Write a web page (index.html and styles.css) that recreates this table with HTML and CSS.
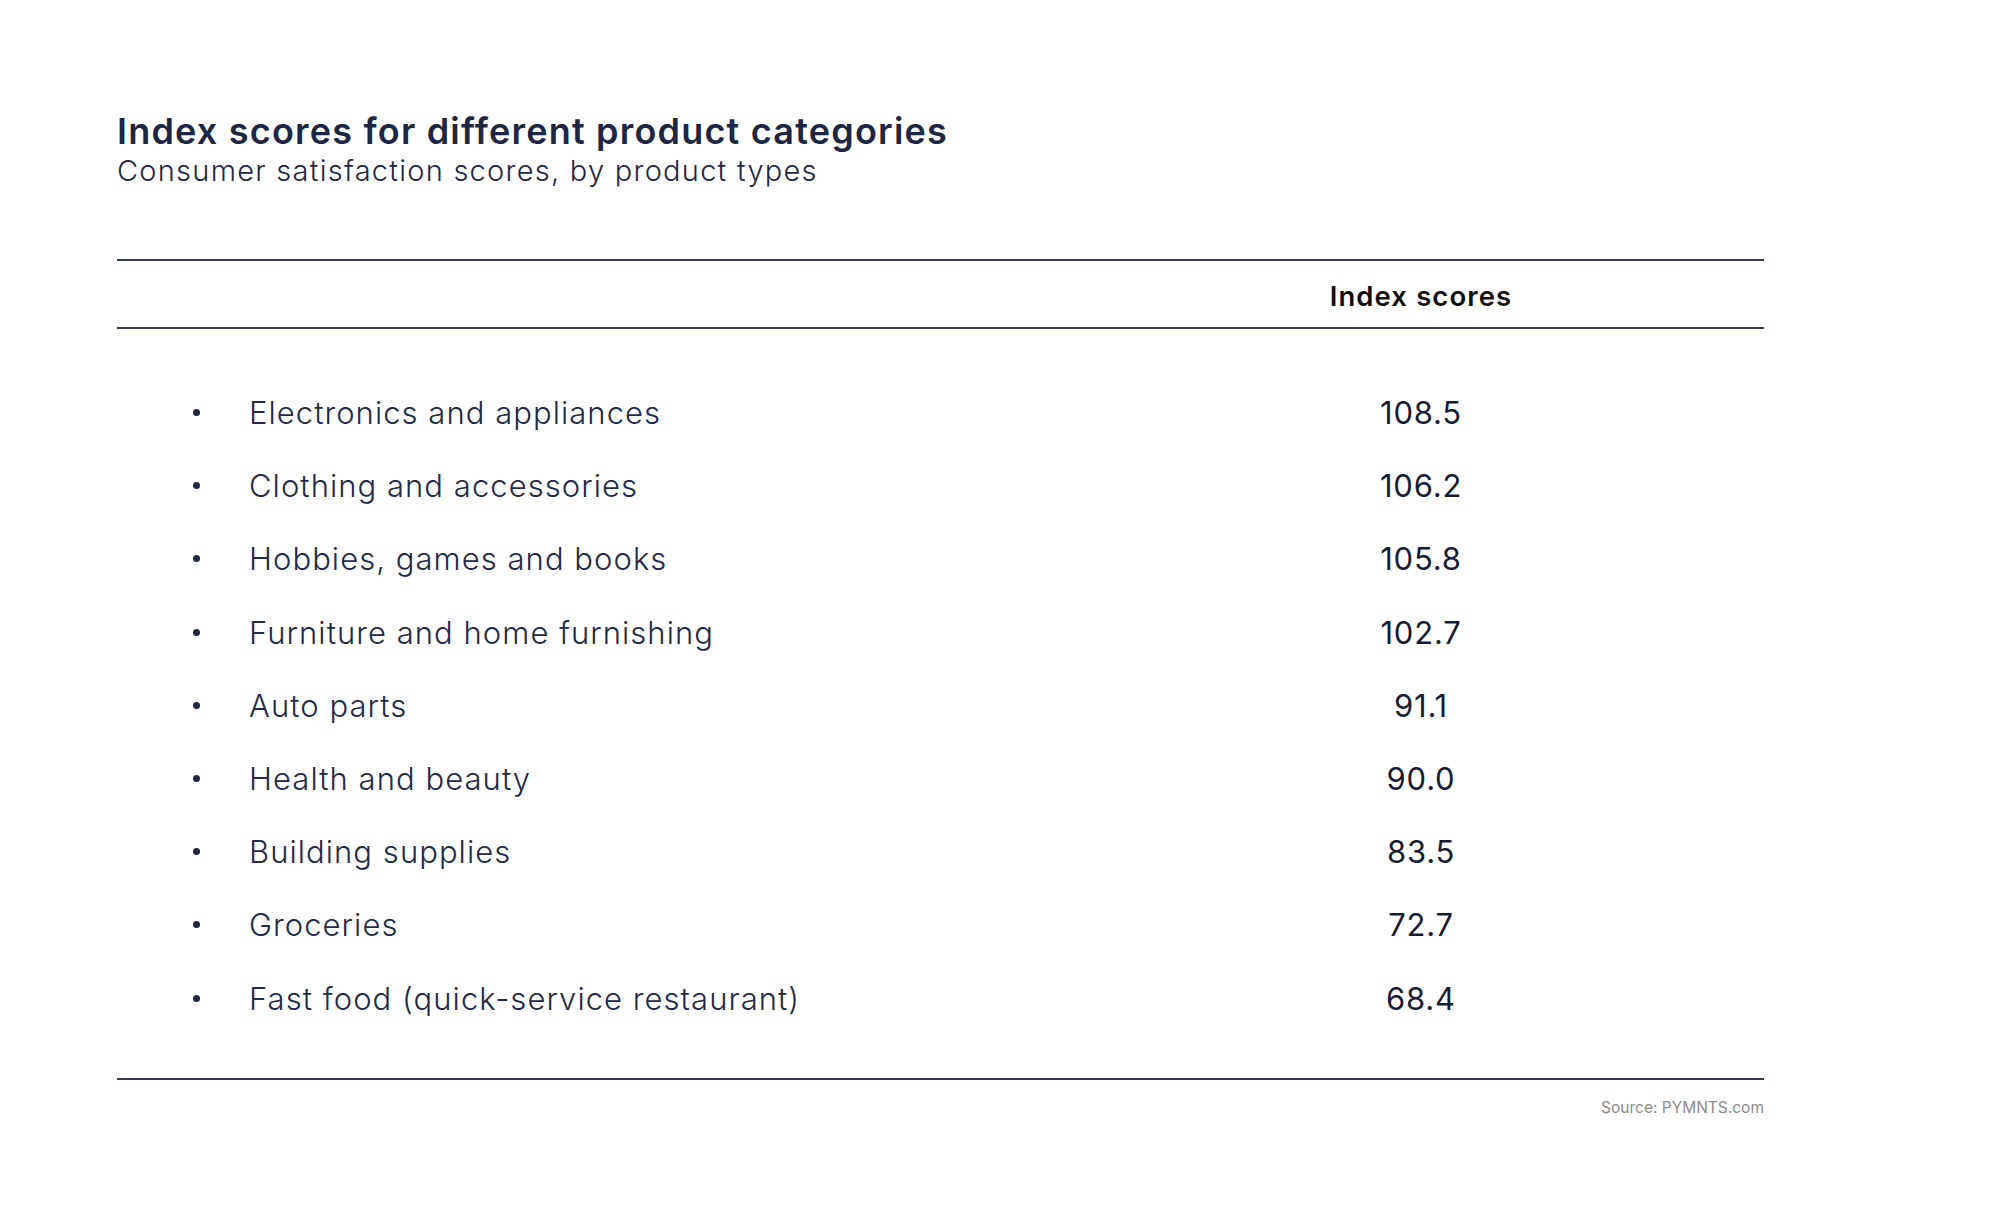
FILE: index.html
```html
<!DOCTYPE html>
<html lang="en">
<head>
<meta charset="utf-8">
<title>Index scores for different product categories</title>
<link rel="stylesheet" href="styles.css">
</head>
<body>
<div class="page">
  <h1 class="title">Index scores for different product categories</h1>
  <p class="subtitle">Consumer satisfaction scores, by product types</p>
  <div class="table">
    <div class="head">
      <div class="head-label"></div>
      <div class="head-score">Index scores</div>
    </div>
    <div class="body">
      <div class="row"><div class="label"><span class="dot"></span><span class="name">Electronics and appliances</span></div><div class="score">108.5</div></div>
      <div class="row"><div class="label"><span class="dot"></span><span class="name">Clothing and accessories</span></div><div class="score">106.2</div></div>
      <div class="row"><div class="label"><span class="dot"></span><span class="name">Hobbies, games and books</span></div><div class="score">105.8</div></div>
      <div class="row"><div class="label"><span class="dot"></span><span class="name">Furniture and home furnishing</span></div><div class="score">102.7</div></div>
      <div class="row"><div class="label"><span class="dot"></span><span class="name">Auto parts</span></div><div class="score">91.1</div></div>
      <div class="row"><div class="label"><span class="dot"></span><span class="name">Health and beauty</span></div><div class="score">90.0</div></div>
      <div class="row"><div class="label"><span class="dot"></span><span class="name">Building supplies</span></div><div class="score">83.5</div></div>
      <div class="row"><div class="label"><span class="dot"></span><span class="name">Groceries</span></div><div class="score">72.7</div></div>
      <div class="row"><div class="label"><span class="dot"></span><span class="name">Fast food (quick-service restaurant)</span></div><div class="score">68.4</div></div>
    </div>
  </div>
  <div class="source">Source: PYMNTS.com</div>
</div>
</body>
</html>
```
FILE: styles.css
```css
html, body {
  margin: 0;
  padding: 0;
  background: #ffffff;
}
body {
  font-family: Inter, "Open Sans", "Liberation Sans", sans-serif;
  color: #1f2744;
}
.page {
  width: 1647px;
  padding: 111px 0 0 117px;
}
.title {
  margin: 0;
  font-size: 36px;
  line-height: 40px;
  font-weight: 600;
  color: #1d2642;
  letter-spacing: 1.2px;
}
.subtitle {
  margin: 0;
  font-size: 29px;
  line-height: 40px;
  font-weight: 300;
  color: #1f2744;
  letter-spacing: 1.25px;
}
.table {
  margin-top: 68px;
}
.head {
  display: grid;
  grid-template-columns: 961px 686px;
  border-top: 2px solid #363c4f;
  border-bottom: 2px solid #363c4f;
  height: 66px;
  align-items: center;
}
.head-score {
  text-align: center;
  font-size: 27.5px;
  font-weight: 600;
  color: #111111;
  letter-spacing: 1.1px;
  padding-top: 3px;
}
.body {
  padding: 47px 0 43px;
  border-bottom: 2px solid #363c4f;
}
.row {
  display: grid;
  grid-template-columns: 961px 686px;
  height: 73.2px;
  align-items: center;
}
.label {
  display: flex;
  align-items: center;
  padding-left: 76px;
}
.dot {
  width: 7px;
  height: 7px;
  border-radius: 50%;
  background: #1f2744;
  margin-right: 49px;
  flex: none;
}
.name {
  font-size: 31px;
  font-weight: 300;
  letter-spacing: 1.05px;
  color: #222a48;
}
.score {
  text-align: center;
  font-size: 31px;
  font-weight: 400;
  letter-spacing: 0.8px;
  color: #161c36;
}
.source {
  margin-top: 18px;
  text-align: right;
  font-size: 15.5px;
  line-height: 20px;
  color: #8a8a8a;
}
```
